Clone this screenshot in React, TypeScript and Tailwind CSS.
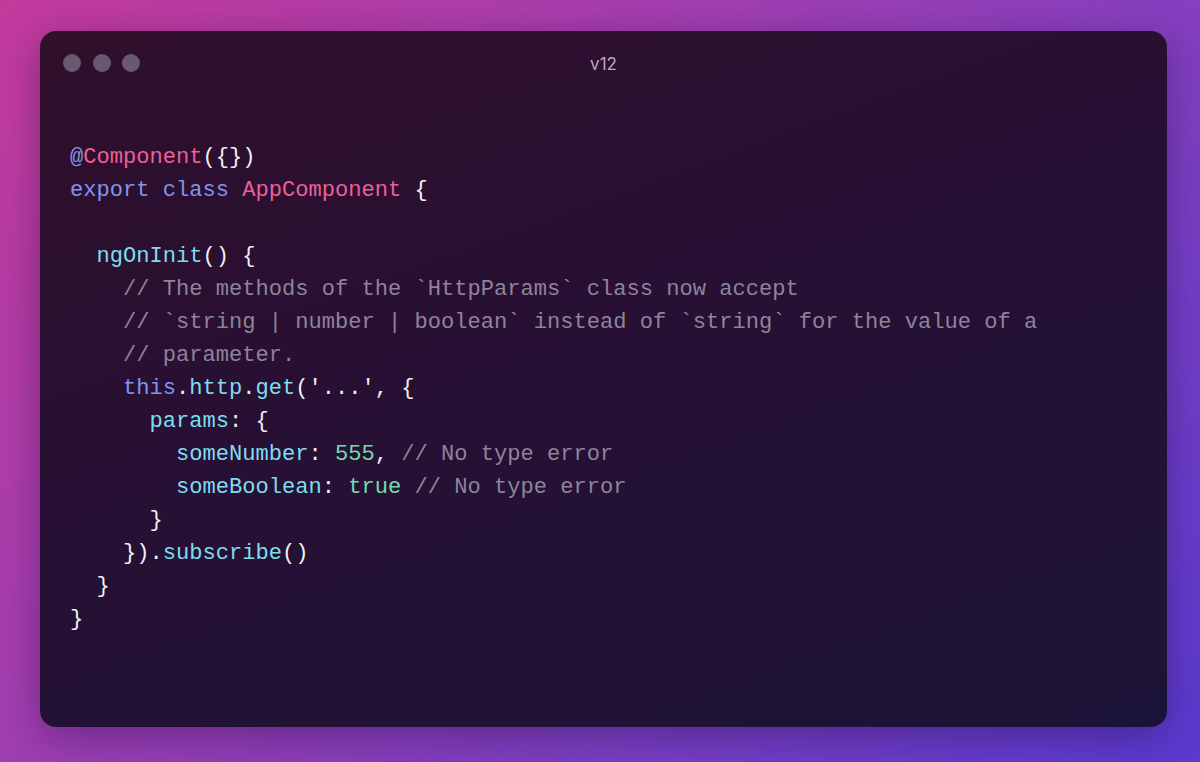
import React from "react";

type Tok = [string, string];

const W = "text-[#f2eef5]";
const B = "text-[#7f95f0]";
const P = "text-[#ea5f9c]";
const C = "text-[#7fdcf0]";
const G = "text-[#72dcb0]";
const M = "text-[#8f8399]";

const lines: Tok[][] = [
  [["@", B], ["Component", P], ["({})", W]],
  [["export class ", B], ["AppComponent", P], [" {", W]],
  [],
  [["  ", W], ["ngOnInit", C], ["() {", W]],
  [["    // The methods of the `HttpParams` class now accept", M]],
  [["    // `string | number | boolean` instead of `string` for the value of a", M]],
  [["    // parameter.", M]],
  [["    ", W], ["this", B], [".", W], ["http", C], [".", W], ["get", C], ["('...', {", W]],
  [["      ", W], ["params", C], [": {", W]],
  [["        ", W], ["someNumber", C], [": ", W], ["555", G], [", ", W], ["// No type error", M]],
  [["        ", W], ["someBoolean", C], [": ", W], ["true", G], [" ", W], ["// No type error", M]],
  [["      }", W]],
  [["    })", W], [".", W], ["subscribe", C], ["()", W]],
  [["  }", W]],
  [["}", W]],
];

export default function App() {
  return (
    <div className="w-[1200px] h-[762px] overflow-hidden bg-[linear-gradient(135deg,#c43a9c_0%,#a43eb0_35%,#7a3fc4_70%,#5a3ad0_100%)] pt-[31px] pl-[40px]">
      <div className="w-[1127px] h-[696px] rounded-[16px] bg-[linear-gradient(160deg,#300f2a_0%,#271034_45%,#1b1438_100%)] shadow-[0_10px_40px_rgba(20,0,40,0.35)] flex flex-col">
        <div className="grid grid-cols-[1fr_auto_1fr] items-center h-[18px] mt-[23px] px-[23px]">
          <div className="flex gap-[11.5px]">
            <div className="w-[18px] h-[18px] rounded-full bg-[#6a5870]" />
            <div className="w-[18px] h-[18px] rounded-full bg-[#6a5870]" />
            <div className="w-[18px] h-[18px] rounded-full bg-[#6a5870]" />
          </div>
          <div className="text-[17px] leading-[18px] text-[#b9aac4] font-['Inter',sans-serif] translate-y-[1px]">v12</div>
          <div />
        </div>
        <div className="pt-[68.5px] pl-[30px] font-['Liberation_Mono',monospace] text-[22.08px] leading-[33px] whitespace-pre">
          {lines.map((l, i) => (
            <div key={i} className="h-[33px]">
              {l.map((t, j) => (
                <span key={j} className={t[1]}>{t[0]}</span>
              ))}
            </div>
          ))}
        </div>
      </div>
    </div>
  );
}
